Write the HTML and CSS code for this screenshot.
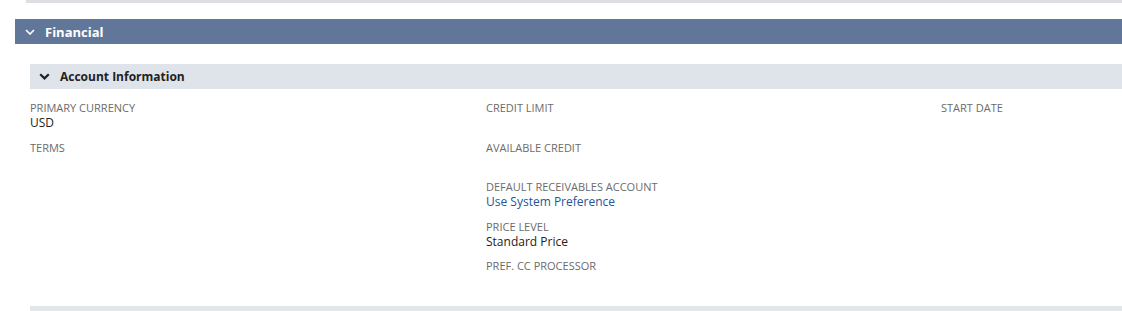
FILE: index.html
```html
<!DOCTYPE html>
<html lang="en">
<head>
  <meta charset="UTF-8" />
  <title>Financial</title>
  <link rel="stylesheet" href="styles.css">
</head>
<body>

  <div class="top-line"></div>

  <div class="section">
    <div class="section-header">
      <svg class="chev" width="10" height="6" viewBox="0 0 10 6"><path d="M1 1 L5 5 L9 1" fill="none" stroke="#fff" stroke-width="1.6"/></svg>
      Financial
    </div>

    <div class="subsection">
      <div class="sub-header">
        <svg class="chev" width="11" height="7" viewBox="0 0 11 7"><path d="M1.2 1.2 L5.5 5.4 L9.8 1.2" fill="none" stroke="#222" stroke-width="2.2"/></svg>
        Account Information
      </div>

      <div class="fields">
        <div class="col">
          <div class="field">
            <div class="label">Primary Currency</div>
            <div class="value">USD</div>
          </div>
          <div class="field">
            <div class="label">Terms</div>
            <div class="value"></div>
          </div>
        </div>

        <div class="col">
          <div class="field">
            <div class="label">Credit Limit</div>
            <div class="value"></div>
          </div>
          <div class="field">
            <div class="label">Available Credit</div>
            <div class="value"></div>
          </div>
          <div class="field">
            <div class="label">Default Receivables Account</div>
            <div class="value"><a href="#">Use System Preference</a></div>
          </div>
          <div class="field">
            <div class="label">Price Level</div>
            <div class="value">Standard Price</div>
          </div>
          <div class="field">
            <div class="label">Pref. CC Processor</div>
            <div class="value"></div>
          </div>
        </div>

        <div class="col">
          <div class="field">
            <div class="label">Start Date</div>
            <div class="value"></div>
          </div>
        </div>
      </div>

      <div class="bottom-line"></div>
    </div>
  </div>

</body>
</html>
```

FILE: styles.css
```css
body {
  font-family: "Open Sans", Arial, sans-serif;
  margin: 0;
  background-color: #fff;
  color: #222;
}

.top-line {
  margin-left: 26px;
  height: 3px;
  background-color: #dcdee2;
}

.section {
  margin: 16px 0 0 15px;
}

.section-header {
  display: flex;
  align-items: center;
  height: 25px;
  background-color: #607799;
  color: white;
  font-size: 13px;
  font-weight: bold;
  padding-left: 10px;
}

.section-header .chev {
  margin-right: 10px;
}

.subsection {
  margin: 20px 0 0 15px;
}

.sub-header {
  display: flex;
  align-items: center;
  height: 25px;
  background-color: #dfe4eb;
  color: #222;
  font-size: 12px;
  font-weight: bold;
  padding-left: 9px;
}

.sub-header .chev {
  margin-right: 10px;
}

.fields {
  display: grid;
  grid-template-columns: 456px 455px 1fr;
  padding-top: 11px;
}

.field {
  height: 39.5px;
}

.label {
  font-size: 11px;
  line-height: 15px;
  text-transform: uppercase;
  color: #6b6b6b;
}

.value {
  font-size: 12px;
  line-height: 16px;
  min-height: 16px;
  color: #222;
}

.value a {
  color: #255599;
  text-decoration: none;
}

.bottom-line {
  margin-top: 8px;
  height: 6px;
  background-color: #e2e5ea;
}
```
